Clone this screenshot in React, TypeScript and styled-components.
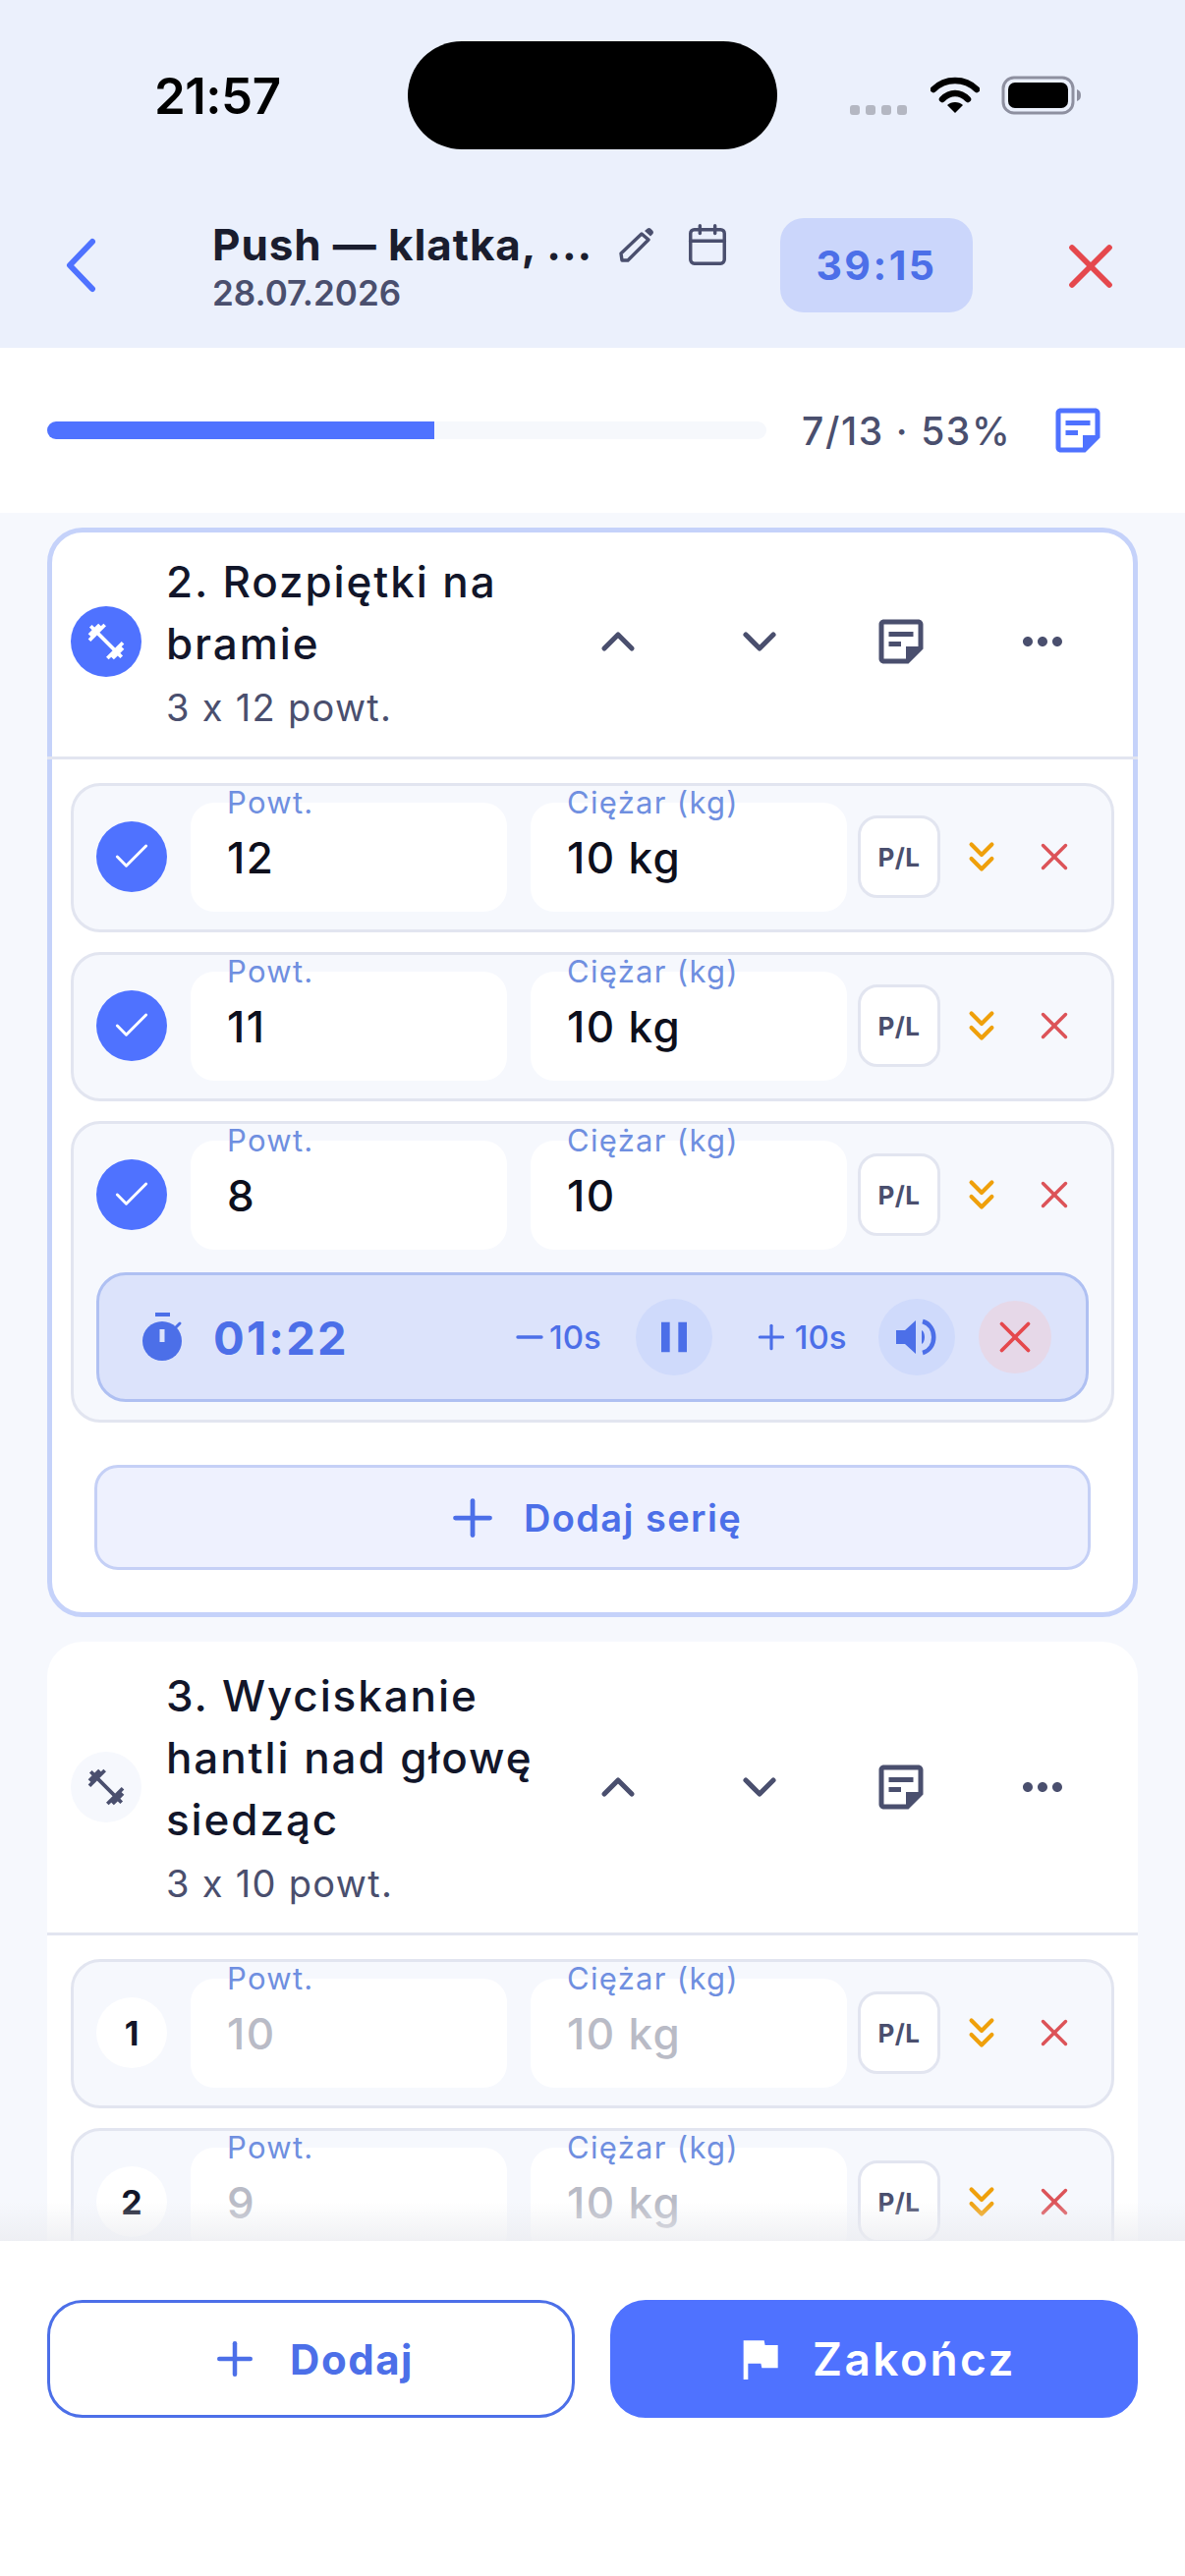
import { ReactNode } from 'react';
import styled, { createGlobalStyle } from 'styled-components';
import { Calendar, Check, ChevronDown, ChevronUp, ChevronsDown, Plus, X } from 'lucide-react';
import { MdFitnessCenter, MdFlag, MdMoreHoriz, MdOutlineStickyNote2, MdPause } from 'react-icons/md';

const BLUE = '#4f72ff';
const BLUE_TEXT = '#4c6fe8';
const INK = '#12162a';
const SLATE = '#4a4f6e';
const RED = '#e5484d';
const LINE = '#e2e5f0';

const GlobalStyle = createGlobalStyle`
  html, body {
    margin: 0;
    padding: 0;
    background: #f6f8fd;
    font-family: Inter, "Noto Sans", sans-serif;
  }
  * { box-sizing: border-box; }
`;

const Screen = styled.div`
  width: 1206px;
  height: 2622px;
  display: flex;
  flex-direction: column;
  overflow: hidden;
  background: #f6f8fd;
`;

const Top = styled.header`
  height: 354px;
  flex: none;
  background: #ebf0fc;
  display: flex;
  flex-direction: column;
`;

const StatusBar = styled.div`
  height: 194px;
  flex: none;
  padding: 42px 78px 0 157px;
  display: flex;
  align-items: flex-start;
`;

const Clock = styled.div`
  width: 258px;
  height: 110px;
  display: flex;
  align-items: center;
  font-size: 51px;
  font-weight: 600;
  color: #000;
  letter-spacing: -0.5px;
`;

const Island = styled.div`
  width: 376px;
  height: 110px;
  border-radius: 55px;
  background: #000;
`;

const StatusIcons = styled.div`
  flex: 1;
  height: 110px;
  padding-left: 74px;
  display: flex;
  align-items: center;
`;

const CellDots = styled.div`
  display: flex;
  gap: 6px;
  margin-top: 29px;
  margin-right: 24px;

  i {
    width: 10px;
    height: 10px;
    border-radius: 3px;
    background: #b4b7c2;
  }
`;

const TitleRow = styled.div`
  flex: 1;
  display: flex;
  align-items: flex-start;
  padding-left: 60px;
`;

const BackButton = styled.div`
  width: 156px;
  padding: 48px 0 0 5px;
  color: ${BLUE};
  display: flex;
`;

const TitleBlock = styled.div`
  width: 384px;
  padding-top: 28px;
`;

const Title = styled.div`
  font-size: 44px;
  line-height: 54px;
  font-weight: 700;
  color: #1a1d2e;
  letter-spacing: 0.9px;
  white-space: nowrap;
`;

const DateText = styled.div`
  font-size: 35px;
  line-height: 40px;
  font-weight: 600;
  color: ${SLATE};
  margin-top: 2px;
`;

const TitleIcons = styled.div`
  width: 194px;
  height: 78px;
  padding-top: 32px;
  padding-left: 27px;
  display: flex;
  align-items: center;
  gap: 30px;
  color: ${SLATE};
`;

const TimerPill = styled.div`
  width: 196px;
  height: 96px;
  margin-top: 28px;
  border-radius: 24px;
  background: #cbd6fb;
  color: ${BLUE_TEXT};
  font-size: 41px;
  font-weight: 700;
  letter-spacing: 2.5px;
  display: flex;
  align-items: center;
  justify-content: center;
`;

const CloseButton = styled.div`
  margin-left: 82px;
  margin-top: 39px;
  color: ${RED};
  display: flex;
`;

const ProgressPanel = styled.div`
  height: 168px;
  flex: none;
  background: #fff;
  padding-left: 48px;
  display: flex;
  align-items: center;
  gap: 36px;
`;

const ProgressTrack = styled.div`
  width: 732px;
  height: 18px;
  flex: none;
  border-radius: 9px;
  background: #f6f8fc;
  overflow: hidden;
`;

const ProgressFill = styled.div`
  height: 100%;
  background: ${BLUE};
`;

const ProgressLabel = styled.div`
  width: 210px;
  flex: none;
  font-size: 39px;
  font-weight: 500;
  color: ${SLATE};
  letter-spacing: 1.6px;
  white-space: nowrap;
`;

const ProgressNote = styled.div`
  display: flex;
  color: ${BLUE};
  margin-left: 5px;
`;

const Scroll = styled.main`
  flex: 1;
  min-height: 0;
  overflow: hidden;
  padding: 15px 48px 0;
  display: flex;
  flex-direction: column;
  gap: 25px;
  position: relative;
`;

const Card = styled.section<{ $active?: boolean }>`
  flex: none;
  background: #fff;
  border-radius: 36px;
  border: 5px solid ${(p) => (p.$active ? '#c5d2fa' : '#fff')};
`;

const ExerciseHead = styled.div`
  padding: 19px 0 25px 24px;
  border-bottom: 3px solid ${LINE};
  display: flex;
  align-items: center;
  margin: 0 -5px;
`;

const ExerciseIcon = styled.div<{ $active?: boolean }>`
  width: 72px;
  height: 72px;
  flex: none;
  border-radius: 50%;
  background: ${(p) => (p.$active ? BLUE : '#f6f8fd')};
  color: ${(p) => (p.$active ? '#fff' : SLATE)};
  display: flex;
  align-items: center;
  justify-content: center;
`;

const ExerciseText = styled.div`
  width: 400px;
  margin-left: 25px;
`;

const ExerciseName = styled.div`
  font-size: 44px;
  line-height: 63px;
  font-weight: 550;
  color: ${INK};
  letter-spacing: 1.9px;
`;

const ExerciseMeta = styled.div`
  font-size: 38px;
  line-height: 50px;
  margin-top: 8px;
  color: ${SLATE};
  letter-spacing: 1.3px;
`;

const HeadActions = styled.div`
  display: flex;
  align-items: center;
  margin-left: -12px;
  color: ${SLATE};
`;

const HeadAction = styled.div`
  width: 144px;
  display: flex;
  justify-content: center;
`;

const SetList = styled.div`
  padding: 24px 19px 0;
  display: flex;
  flex-direction: column;
  gap: 20px;
`;

const SetCard = styled.div`
  background: #f6f8fd;
  border: 3px solid ${LINE};
  border-radius: 30px;
  padding: 16px 23px 18px;
`;

const SetRow = styled.div`
  display: flex;
  align-items: center;
  height: 112px;
`;

const SetBadge = styled.div<{ $done?: boolean }>`
  width: 72px;
  height: 72px;
  flex: none;
  border-radius: 50%;
  background: ${(p) => (p.$done ? BLUE : '#fff')};
  color: ${(p) => (p.$done ? '#fff' : INK)};
  font-size: 34px;
  font-weight: 700;
  display: flex;
  align-items: center;
  justify-content: center;
`;

const Field = styled.div`
  width: 322px;
  height: 111px;
  margin-top: 1px;
  flex: none;
  border-radius: 24px;
  background: #fff;
  margin-left: 24px;
  padding-left: 37px;
  position: relative;
  display: flex;
  align-items: center;
`;

const FieldLabel = styled.span`
  position: absolute;
  left: 37px;
  top: -19px;
  font-size: 31px;
  line-height: 38px;
  color: #6f8fe0;
  letter-spacing: 1.3px;
`;

const FieldValue = styled.span<{ $placeholder?: boolean }>`
  font-size: 44px;
  font-weight: ${(p) => (p.$placeholder ? 500 : 550)};
  color: ${(p) => (p.$placeholder ? '#b9bbc6' : '#0d0f1c')};
  letter-spacing: 1.4px;
`;

const SideButton = styled.div`
  width: 84px;
  height: 84px;
  flex: none;
  margin-left: 11px;
  border: 3px solid ${LINE};
  border-radius: 20px;
  background: #fff;
  font-size: 26px;
  font-weight: 700;
  letter-spacing: 0.5px;
  color: ${SLATE};
  display: flex;
  align-items: center;
  justify-content: center;
`;

const RowAction = styled.div<{ $color: string; $left: number }>`
  display: flex;
  margin-left: ${(p) => p.$left}px;
  color: ${(p) => p.$color};
`;

const RestTimer = styled.div`
  height: 132px;
  margin-top: 23px;
  border: 3px solid #afc0f2;
  border-radius: 30px;
  background: #dce3fb;
  padding-left: 42px;
  display: flex;
  align-items: center;
  color: ${BLUE_TEXT};
`;

const RestTime = styled.div`
  font-size: 47px;
  font-weight: 700;
  letter-spacing: 2.2px;
  width: 306px;
  flex: none;
  margin-left: 26px;
`;

const RestStep = styled.div<{ $left?: number }>`
  display: flex;
  align-items: center;
  gap: 4px;
  flex: none;
  margin-left: ${(p) => p.$left ?? 0}px;
  font-size: 33px;
  font-weight: 500;
`;

const RoundButton = styled.div<{ $danger?: boolean; $size: number; $left: number }>`
  width: ${(p) => p.$size}px;
  height: ${(p) => p.$size}px;
  flex: none;
  border-radius: 50%;
  margin-left: ${(p) => p.$left}px;
  background: ${(p) => (p.$danger ? '#e6d8e8' : '#cfdafb')};
  color: ${(p) => (p.$danger ? RED : BLUE_TEXT)};
  display: flex;
  align-items: center;
  justify-content: center;
`;

const AddSet = styled.div`
  height: 107px;
  margin: 43px 43px 43px;
  border: 3px solid #c5d0f6;
  border-radius: 24px;
  background: #eef1fe;
  color: ${BLUE_TEXT};
  font-size: 38px;
  font-weight: 600;
  letter-spacing: 1.4px;
  display: flex;
  align-items: center;
  justify-content: center;
  gap: 22px;
`;

const Fade = styled.div`
  position: absolute;
  left: 0;
  right: 0;
  bottom: 0;
  height: 40px;
  background: linear-gradient(to bottom, rgba(235, 236, 240, 0), rgba(235, 236, 240, 0.75));
`;

const Footer = styled.footer`
  height: 341px;
  flex: none;
  background: #fff;
  padding: 60px 48px 0;
  display: flex;
  align-items: flex-start;
  gap: 36px;
`;

const FooterButton = styled.div<{ $primary?: boolean }>`
  flex: 1;
  height: 120px;
  border-radius: 36px;
  border: 3px solid ${(p) => (p.$primary ? BLUE : BLUE_TEXT)};
  background: ${(p) => (p.$primary ? BLUE : '#fff')};
  color: ${(p) => (p.$primary ? '#fff' : BLUE_TEXT)};
  font-size: ${(p) => (p.$primary ? 46 : 42)}px;
  font-weight: ${(p) => (p.$primary ? 600 : 700)};
  letter-spacing: ${(p) => (p.$primary ? 2.5 : 1.5)}px;
  display: flex;
  align-items: center;
  justify-content: center;
  gap: ${(p) => (p.$primary ? 26 : 29)}px;
`;

const WifiIcon = () => (
  <svg width="50" height="38" viewBox="0 0 50 38">
    <path d="M3 13 C15 1 35 1 47 13" fill="none" stroke="#000" strokeWidth="6.5" strokeLinecap="round" />
    <path d="M12 23 C20 15 30 15 38 23" fill="none" stroke="#000" strokeWidth="6.5" strokeLinecap="round" />
    <path d="M17 29 C21 25 29 25 33 29 L25 37 Z" fill="#000" />
  </svg>
);

const BatteryIcon = () => (
  <svg width="82" height="40" viewBox="0 0 82 40" style={{ marginLeft: 22 }}>
    <rect x="2" y="2" width="71" height="36" rx="11" fill="none" stroke="#8e90a0" strokeWidth="3" />
    <rect x="7" y="7" width="61" height="26" rx="7" fill="#000" />
    <path d="M77 14 C80 15 81 17 81 20 C81 23 80 25 77 26 Z" fill="#8e90a0" />
  </svg>
);

const BackIcon = () => (
  <svg width="34" height="56" viewBox="0 0 34 56">
    <path d="M29 4 L6 28 L29 52" fill="none" stroke="currentColor" strokeWidth="6" strokeLinecap="round" strokeLinejoin="round" />
  </svg>
);

const PencilIcon = () => (
  <svg width="40" height="40" viewBox="0 0 40 40" style={{ flex: 'none' }}>
    <path d="M6 36 L5 29 L26 9 L33 15 L12 36 Z" fill="none" stroke="currentColor" strokeWidth="3.4" strokeLinejoin="round" />
    <path d="M29 6 L32 3.5 Q33.5 2.5 35 3.5 L37.5 6 Q38.5 7.5 37.5 9 L35 11.5 Z" fill="currentColor" />
  </svg>
);

const StopwatchIcon = () => (
  <svg width="48" height="50" viewBox="0 0 48 50" style={{ flex: 'none' }}>
    <rect x="15" y="0" width="15" height="4" fill="currentColor" />
    <circle cx="22" cy="29" r="20" fill="currentColor" />
    <path d="M36 15 L40 11" stroke="currentColor" strokeWidth="3" strokeLinecap="round" />
    <rect x="19.5" y="17" width="5" height="13" fill="#dce3fb" />
  </svg>
);

const SpeakerIcon = () => (
  <svg width="42" height="40" viewBox="0 0 42 40">
    <path d="M0 13 H9 L20 3 V37 L9 27 H0 Z" fill="currentColor" />
    <path d="M26 13 C30 15 30 25 26 27 Z" fill="currentColor" />
    <path d="M27 4 C42 8 42 32 27 36" fill="none" stroke="currentColor" strokeWidth="4.5" />
  </svg>
);

interface SetData {
  badge: ReactNode;
  reps: string;
  weight: string;
  done?: boolean;
}

const SetLine = ({ badge, reps, weight, done }: SetData) => (
  <SetRow>
    <SetBadge $done={done}>{badge}</SetBadge>
    <Field>
      <FieldLabel>Powt.</FieldLabel>
      <FieldValue $placeholder={!done}>{reps}</FieldValue>
    </Field>
    <Field>
      <FieldLabel>Ciężar (kg)</FieldLabel>
      <FieldValue $placeholder={!done}>{weight}</FieldValue>
    </Field>
    <SideButton>P/L</SideButton>
    <RowAction $color="#efa00b" $left={17}>
      <ChevronsDown size={50} strokeWidth={2} />
    </RowAction>
    <RowAction $color="#dc5358" $left={26}>
      <X size={46} strokeWidth={1.8} />
    </RowAction>
  </SetRow>
);

const ExerciseHeader = ({ name, meta, active }: { name: string; meta: string; active?: boolean }) => (
  <ExerciseHead>
    <ExerciseIcon $active={active}>
      <MdFitnessCenter size={44} />
    </ExerciseIcon>
    <ExerciseText>
      <ExerciseName>{name}</ExerciseName>
      <ExerciseMeta>{meta}</ExerciseMeta>
    </ExerciseText>
    <HeadActions>
      <HeadAction>
        <ChevronUp size={56} strokeWidth={2.2} />
      </HeadAction>
      <HeadAction>
        <ChevronDown size={56} strokeWidth={2.2} />
      </HeadAction>
      <HeadAction>
        <MdOutlineStickyNote2 size={60} />
      </HeadAction>
      <HeadAction>
        <MdMoreHoriz size={60} />
      </HeadAction>
    </HeadActions>
  </ExerciseHead>
);

const doneCheck = <Check size={44} strokeWidth={1.6} />;

export default function App() {
  return (
    <Screen>
      <GlobalStyle />
      <Top>
        <StatusBar>
          <Clock>21:57</Clock>
          <Island />
          <StatusIcons>
            <CellDots>
              <i />
              <i />
              <i />
              <i />
            </CellDots>
            <WifiIcon />
            <BatteryIcon />
          </StatusIcons>
        </StatusBar>
        <TitleRow>
          <BackButton>
            <BackIcon />
          </BackButton>
          <TitleBlock>
            <Title>Push — klatka, ...</Title>
            <DateText>28.07.2026</DateText>
          </TitleBlock>
          <TitleIcons>
            <PencilIcon />
            <Calendar size={46} strokeWidth={1.8} />
          </TitleIcons>
          <TimerPill>39:15</TimerPill>
          <CloseButton>
            <X size={76} strokeWidth={1.8} />
          </CloseButton>
        </TitleRow>
      </Top>

      <ProgressPanel>
        <ProgressTrack>
          <ProgressFill style={{ width: `${(394 / 732) * 100}%` }} />
        </ProgressTrack>
        <ProgressLabel>7/13 · 53%</ProgressLabel>
        <ProgressNote>
          <MdOutlineStickyNote2 size={60} />
        </ProgressNote>
      </ProgressPanel>

      <Scroll>
        <Card $active>
          <ExerciseHeader name="2. Rozpiętki na bramie" meta="3 x 12 powt." active />
          <SetList>
            <SetCard>
              <SetLine badge={doneCheck} reps="12" weight="10 kg" done />
            </SetCard>
            <SetCard>
              <SetLine badge={doneCheck} reps="11" weight="10 kg" done />
            </SetCard>
            <SetCard>
              <SetLine badge={doneCheck} reps="8" weight="10" done />
              <RestTimer>
                <StopwatchIcon />
                <RestTime>01:22</RestTime>
                <RestStep>
                  <svg width="32" height="28" viewBox="0 0 32 28">
                    <path d="M4 14h24" stroke="currentColor" strokeWidth="3.4" strokeLinecap="round" />
                  </svg>
                  10s
                </RestStep>
                <RoundButton $size={78} $left={35}>
                  <MdPause size={52} />
                </RoundButton>
                <RestStep $left={40}>
                  <Plus size={40} strokeWidth={1.9} />
                  10s
                </RestStep>
                <RoundButton $size={78} $left={32}>
                  <SpeakerIcon />
                </RoundButton>
                <RoundButton $danger $size={74} $left={24}>
                  <X size={54} strokeWidth={1.7} />
                </RoundButton>
              </RestTimer>
            </SetCard>
          </SetList>
          <AddSet>
            <Plus size={60} strokeWidth={1.9} />
            Dodaj serię
          </AddSet>
        </Card>

        <Card>
          <ExerciseHeader name="3. Wyciskanie hantli nad głowę siedząc" meta="3 x 10 powt." />
          <SetList>
            <SetCard>
              <SetLine badge="1" reps="10" weight="10 kg" />
            </SetCard>
            <SetCard>
              <SetLine badge="2" reps="9" weight="10 kg" />
            </SetCard>
          </SetList>
        </Card>
        <Fade />
      </Scroll>

      <Footer>
        <FooterButton>
          <Plus size={54} strokeWidth={2} />
          Dodaj
        </FooterButton>
        <FooterButton $primary>
          <MdFlag size={56} />
          Zakończ
        </FooterButton>
      </Footer>
    </Screen>
  );
}
